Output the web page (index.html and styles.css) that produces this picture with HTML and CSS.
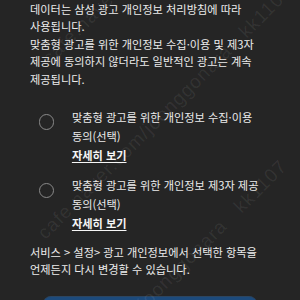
FILE: index.html
```html
<!DOCTYPE html>
<html lang="ko">
<head>
<meta charset="utf-8">
<title>맞춤형 광고</title>
<link rel="stylesheet" href="styles.css">
</head>
<body>
<main class="screen">
  <p class="intro">데이터는 삼성 광고 개인정보 처리방침에 따라<br>사용됩니다.<br>맞춤형 광고를 위한 개인정보 수집·이용 및 제3자<br>제공에 동의하지 않더라도 일반적인 광고는 계속<br>제공됩니다.</p>
  <ul class="options">
    <li class="option">
      <span class="radio"></span>
      <div class="option-body">
        <p class="option-title">맞춤형 광고를 위한 개인정보 수집·이용<br>동의(선택)</p>
        <a class="detail">자세히 보기</a>
      </div>
    </li>
    <li class="option">
      <span class="radio"></span>
      <div class="option-body">
        <p class="option-title">맞춤형 광고를 위한 개인정보 제3자 제공<br>동의(선택)</p>
        <a class="detail">자세히 보기</a>
      </div>
    </li>
  </ul>
  <p class="note">서비스 &gt; 설정&gt; 광고 개인정보에서 선택한 항목을<br>언제든지 다시 변경할 수 있습니다.</p>
  <div class="button"></div>
</main>
<div class="watermark">
  <span class="wm wm-c">cafe.naver.com/joonggonara&nbsp;&nbsp;&nbsp;kk1107</span>
  <span class="wm wm-a">cafe.naver.com/joonggonara&nbsp;&nbsp;&nbsp;kk1107</span>
  <span class="wm wm-b">cafe.naver.com/joonggonara&nbsp;&nbsp;&nbsp;kk1107</span>
</div>
</body>
</html>
```

FILE: styles.css
```css
html, body {
  margin: 0;
  height: 300px;
  overflow: hidden;
  background: #252525;
}

body {
  position: relative;
  font-family: "Noto Sans CJK KR", "Noto Sans", sans-serif;
  font-size: 11.2px;
  color: #ececec;
  white-space: nowrap;
}

.screen {
  padding: 0 30px;
}

.intro {
  margin: 0;
  padding-top: 0.5px;
  line-height: 17.5px;
}

.options {
  list-style: none;
  margin: 19.5px 0 0;
  padding: 0 0 0 9px;
  display: flex;
  flex-direction: column;
  gap: 12px;
}

.option {
  display: flex;
  align-items: flex-start;
  gap: 17.5px;
}

.radio {
  flex: none;
  width: 15.4px;
  height: 15.4px;
  box-sizing: border-box;
  border: 1.3px solid #8a8a8a;
  border-radius: 50%;
  margin-top: 6.7px;
}

.option-title {
  margin: 0;
  line-height: 19px;
}

.detail {
  display: block;
  line-height: 18.5px;
  font-weight: 700;
  color: #f6f6f6;
  text-decoration: underline;
  text-decoration-thickness: 1px;
  text-underline-offset: 2px;
}

.note {
  margin: 11.7px 0 0;
  line-height: 16.7px;
}

.button {
  margin: 18px 13px 0;
  height: 24px;
  background: #1c4a7c;
  border-top: 1px solid #2c4560;
  border-radius: 8px 8px 0 0;
}

.watermark {
  position: absolute;
  inset: 0;
  overflow: hidden;
  pointer-events: none;
}

.wm {
  position: absolute;
  font-family: "Liberation Sans", sans-serif;
  font-size: 19px;
  line-height: 1;
  letter-spacing: 1px;
  color: rgba(255, 255, 255, 0.075);
  transform-origin: 0 0;
  transform: rotate(-45deg);
}

.wm-c { left: 39px; top: 54px; }
.wm-a { left: 34px; top: 229px; }
.wm-b { left: 29px; top: 404px; }
```
